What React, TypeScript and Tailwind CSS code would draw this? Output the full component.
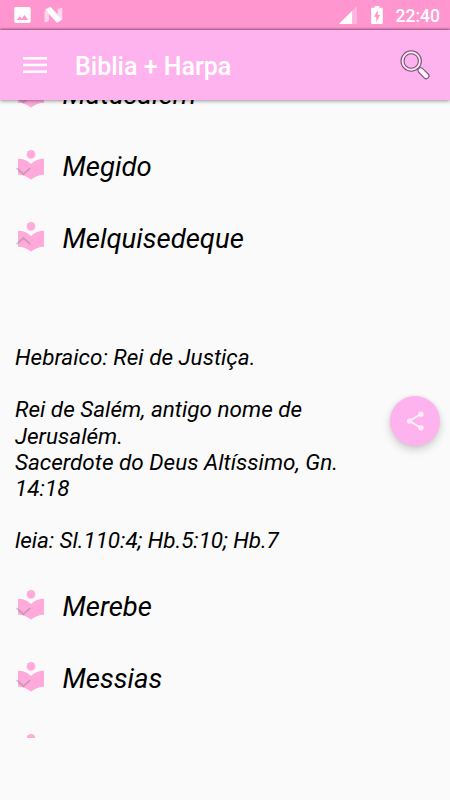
const previousEntries = ["Matusalém", "Megido"];
const nextEntries = ["Merebe", "Messias", "Mical"];

function BookIcon({ open }: { open?: boolean }) {
  return (
    <svg viewBox="0 0 36 36" className="-mt-[2px] size-9 shrink-0">
      <g transform="translate(.67 .2) scale(1.444)" fill="#ffaadb">
        <path d="M12 11.55C9.64 9.35 6.48 8 3 8v11c3.48 0 6.64 1.35 9 3.55 2.36-2.19 5.52-3.55 9-3.55V8c-3.48 0-6.64 1.35-9 3.55z" />
        <circle cx="12" cy="5" r="3" />
      </g>
      <path
        d={open ? "M3.6 25.2l6.8-6.2 6.8 6.2" : "M3.6 21.2l6.8 6 6.8-6"}
        fill="none"
        stroke="#777"
        strokeOpacity=".36"
        strokeWidth="1.8"
      />
    </svg>
  );
}

function Entry({ name, open }: { name: string; open?: boolean }) {
  return (
    <div className="flex h-18 shrink-0 items-center pl-[13px]">
      <BookIcon open={open} />
      <span className="ml-[13.5px] pt-[2px] text-[27.5px] leading-8 italic">{name}</span>
    </div>
  );
}

function StatusBar() {
  return (
    <div className="flex h-[30px] items-center bg-[#ff96cf] text-white">
      <svg viewBox="0 0 17 16" className="ml-[14px] h-4 w-[17px]">
        <path
          fillRule="evenodd"
          fill="#fff"
          d="M2 0h13a1.7 1.7 0 0 1 1.7 1.7v12.6A1.7 1.7 0 0 1 15 16H2a1.7 1.7 0 0 1-1.7-1.7V1.7A1.7 1.7 0 0 1 2 0zM2.7 13h11.6l-3.8-5-2.8 3.7-2-2.4z"
        />
      </svg>
      <svg viewBox="0 0 19 16" className="ml-[12.5px] h-4 w-[19px]">
        <path d="M.5 3.5L5 6v8L.5 15.5zM18.3 .5L13.5 2v8L18.3 13z" fill="#fff" fillOpacity=".6" />
        <path d="M1 2.5L5.5.3q1-.5 2 .5L18 12.8l-4.2 2.4q-1 .6-1.8-.4z" fill="#fff" />
      </svg>
      <svg viewBox="0 0 18 18" className="ml-auto size-[18px]">
        <path d="M18 0v18H0z" fill="#fff" fillOpacity=".3" />
        <path d="M13 5v13H0z" fill="#fff" />
      </svg>
      <svg viewBox="0 0 12 18" className="ml-[14px] h-[18px] w-3">
        <path
          fillRule="evenodd"
          fill="#fff"
          d="M3.7 0h4.6v1.8h2.5q1 0 1 1V17q0 1-1 1H1.2q-1 0-1-1V2.8q0-1 1-1h2.5zM6.8 4L2.9 10.8h2.4v5.5L9.1 9H6.8z"
        />
      </svg>
      <span className="mr-[10px] ml-[13px] pt-px text-[17.5px] leading-5 font-medium">22:40</span>
    </div>
  );
}

function Toolbar() {
  return (
    <div className="flex h-[70px] items-center bg-[#ffb3ee] shadow-[0_-1px_2px_rgba(0,0,0,0.35),0_1px_4px_rgba(0,0,0,0.4)]">
      <svg viewBox="0 0 24 16" className="ml-[23px] h-4 w-6">
        <path d="M0 1.2h24M0 8h24M0 14.8h24" stroke="#fff" strokeWidth="2.4" />
      </svg>
      <h1 className="ml-[28px] pt-[3px] text-[25px] leading-8 font-medium text-white">
        Biblia + Harpa
      </h1>
      <svg viewBox="0 0 32 32" className="mr-[19px] ml-auto size-8" fill="none">
        <path
          d="M19 20.3l1.8-1.8 2.2.4 6.2 6.1a2.7 2.7 0 0 1-4 3.9l-6-6.2z"
          fill="#fff"
          fillOpacity=".8"
          stroke="#795671"
          strokeWidth="1.1"
        />
        <circle cx="12.2" cy="12" r="8.7" stroke="#ffe4fa" strokeWidth="2.6" />
        <circle cx="12.2" cy="12" r="10.2" stroke="#795671" strokeWidth="1.1" />
        <circle cx="12.2" cy="12" r="7.2" stroke="#795671" strokeWidth="1.1" />
      </svg>
    </div>
  );
}

export default function App() {
  return (
    <div className="relative flex h-[800px] w-[450px] flex-col overflow-hidden bg-[#fafafa] font-[Roboto,sans-serif] text-black">
      <header className="relative z-10 shrink-0">
        <StatusBar />
        <Toolbar />
      </header>

      <main className="flex h-[638px] flex-col overflow-hidden">
        <div className="-mt-[42px] shrink-0">
          {previousEntries.map((name) => (
            <Entry key={name} name={name} />
          ))}
          <Entry name="Melquisedeque" open />
        </div>

        <div className="mt-[70px] mb-[16.4px] w-[375px] shrink-0 pl-[15px] text-[22.5px] leading-[26.2px] italic">
          <p>Hebraico: Rei de Justiça.</p>
          <p className="mt-[26.2px]">
            Rei de Salém, antigo nome de
            <br />
            Jerusalém.
          </p>
          <p>
            Sacerdote do Deus Altíssimo, Gn.
            <br />
            14:18
          </p>
          <p className="mt-[26.2px] tracking-[-0.06px]">leia: Sl.110:4; Hb.5:10; Hb.7</p>
        </div>

        {nextEntries.map((name) => (
          <Entry key={name} name={name} />
        ))}
      </main>

      <button
        aria-label="Compartilhar"
        className="absolute top-[396.4px] left-[390px] flex size-[50px] items-center justify-center rounded-full bg-[#ffb3ee] shadow-[0_4px_8px_rgba(0,0,0,0.18),0_0_3px_rgba(0,0,0,0.08)]"
      >
        <svg viewBox="0 0 18 20" className="h-5 w-[18px]">
          <path d="M15 3L3.5 10 15 17" fill="none" stroke="#fff" strokeOpacity=".85" strokeWidth="1.8" />
          <circle cx="15" cy="3.2" r="2.6" fill="#ffeffc" />
          <circle cx="3.5" cy="10" r="2.6" fill="#ffeffc" />
          <circle cx="15" cy="16.8" r="2.6" fill="#ffeffc" />
        </svg>
      </button>
    </div>
  );
}
